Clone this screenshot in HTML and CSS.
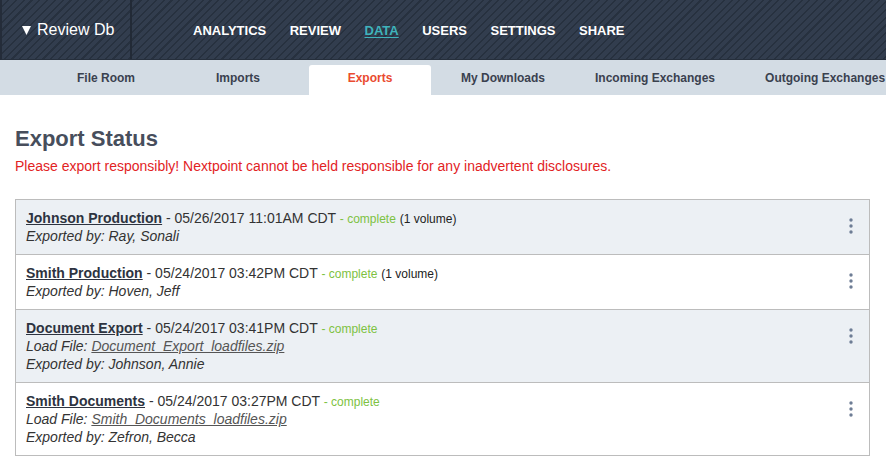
FILE: index.html
```html
<!DOCTYPE html>
<html>
<head>
<meta charset="utf-8">
<link rel="stylesheet" href="styles.css">
</head>
<body>
<header class="topbar">
  <div class="brand">
    <svg class="caret" width="9" height="9" viewBox="0 0 9 9"><polygon points="0,0 9,0 4.5,9" fill="#fff"/></svg>
    <span>Review Db</span>
  </div>
  <nav class="mainnav">
    <a class="navitem">ANALYTICS</a>
    <a class="navitem">REVIEW</a>
    <a class="navitem active">DATA</a>
    <a class="navitem">USERS</a>
    <a class="navitem">SETTINGS</a>
    <a class="navitem">SHARE</a>
  </nav>
</header>
<div class="tabbar">
  <a class="tab">File Room</a>
  <a class="tab">Imports</a>
  <a class="tab current">Exports</a>
  <a class="tab">My Downloads</a>
  <a class="tab">Incoming Exchanges</a>
  <a class="tab">Outgoing Exchanges</a>
</div>
<main class="content">
  <h1 class="title">Export Status</h1>
  <p class="warning">Please export responsibly! Nextpoint cannot be held responsible for any inadvertent disclosures.</p>
  <ul class="exports">
    <li class="row odd">
      <div class="info">
        <div class="line"><a class="name">Johnson Production</a> - 05/26/2017 11:01AM CDT <span class="status">- complete</span> <span class="vol">(1 volume)</span></div>
        <div class="line meta">Exported by: Ray, Sonali</div>
      </div>
      <svg class="kebab" width="4" height="16" viewBox="0 0 4 16"><circle cx="2" cy="2" r="1.7"/><circle cx="2" cy="8" r="1.7"/><circle cx="2" cy="14" r="1.7"/></svg>
    </li>
    <li class="row">
      <div class="info">
        <div class="line"><a class="name">Smith Production</a> - 05/24/2017 03:42PM CDT <span class="status">- complete</span> <span class="vol">(1 volume)</span></div>
        <div class="line meta">Exported by: Hoven, Jeff</div>
      </div>
      <svg class="kebab" width="4" height="16" viewBox="0 0 4 16"><circle cx="2" cy="2" r="1.7"/><circle cx="2" cy="8" r="1.7"/><circle cx="2" cy="14" r="1.7"/></svg>
    </li>
    <li class="row odd">
      <div class="info">
        <div class="line"><a class="name">Document Export</a> - 05/24/2017 03:41PM CDT <span class="status">- complete</span></div>
        <div class="line meta">Load File: <a class="file">Document_Export_loadfiles.zip</a></div>
        <div class="line meta">Exported by: Johnson, Annie</div>
      </div>
      <svg class="kebab" width="4" height="16" viewBox="0 0 4 16"><circle cx="2" cy="2" r="1.7"/><circle cx="2" cy="8" r="1.7"/><circle cx="2" cy="14" r="1.7"/></svg>
    </li>
    <li class="row">
      <div class="info">
        <div class="line"><a class="name">Smith Documents</a> - 05/24/2017 03:27PM CDT <span class="status">- complete</span></div>
        <div class="line meta">Load File: <a class="file">Smith_Documents_loadfiles.zip</a></div>
        <div class="line meta">Exported by: Zefron, Becca</div>
      </div>
      <svg class="kebab" width="4" height="16" viewBox="0 0 4 16"><circle cx="2" cy="2" r="1.7"/><circle cx="2" cy="8" r="1.7"/><circle cx="2" cy="14" r="1.7"/></svg>
    </li>
  </ul>
</main>
</body>
</html>
```
FILE: styles.css
```css
* { box-sizing: border-box; }
html, body {
  margin: 0;
  padding: 0;
  background: #fff;
  font-family: "Liberation Sans", Arial, sans-serif;
}
.topbar {
  height: 60px;
  display: flex;
  align-items: stretch;
  background-color: #323d4e;
  background-image: repeating-linear-gradient(135deg, #323d4e 0px, #323d4e 4px, #27313f 4px, #27313f 5.5px);
  border-left: 2px solid #242c39;
  border-bottom: 1px solid #262f3c;
}
.brand {
  width: 130px;
  border-right: 2px solid #222a36;
  display: flex;
  align-items: center;
  padding-left: 20px;
  color: #fff;
  font-size: 16px;
  gap: 6px;
}
.caret { display: block; margin-top: 1px; }
.mainnav {
  display: flex;
  align-items: center;
  padding-left: 61px;
  gap: 23.5px;
  padding-top: 1px;
}
.navitem {
  color: #fff;
  font-size: 13px;
  font-weight: bold;
  text-decoration: none;
}
.navitem.active {
  color: #3fb3bb;
  text-decoration: underline;
  text-underline-offset: 2px;
}
.tabbar {
  height: 35px;
  background: #d3dce4;
  display: flex;
  gap: 10px;
  padding: 5px 0 0 45px;
  overflow: hidden;
}
.tab {
  min-width: 122px;
  height: 30px;
  padding: 0 20px;
  line-height: 26px;
  text-align: center;
  font-size: 12px;
  font-weight: bold;
  color: #3a414f;
  white-space: nowrap;
  flex-shrink: 0;
  border-radius: 3px 3px 0 0;
}
.tab.current {
  background: #fff;
  color: #ea4b30;
}
.content {
  padding: 0 16px 0 15px;
}
.title {
  margin: 31px 0 0 0;
  font-size: 22px;
  line-height: 26px;
  font-weight: bold;
  color: #474e5c;
}
.warning {
  margin: 5px 0 0 0;
  font-size: 14px;
  line-height: 18px;
  color: #e2231f;
}
.exports {
  list-style: none;
  margin: 24px 0 0 0;
  padding: 0;
  border: 1px solid #bcbcbc;
}
.row {
  display: flex;
  justify-content: space-between;
  align-items: flex-start;
  padding: 9px 10px 9px 10px;
  border-top: 1px solid #bcbcbc;
  background: #fff;
}
.row:first-child { border-top: none; }
.row.odd { background: #ecf0f4; }
.line {
  font-size: 14px;
  line-height: 18px;
  height: 18px;
  color: #333;
  white-space: nowrap;
}
.name {
  font-weight: bold;
  color: #2d3340;
  text-decoration: underline;
}
.status {
  color: #7dc242;
  font-size: 12px;
  line-height: 12px;
}
.vol {
  font-size: 12px;
  line-height: 12px;
  color: #222;
}
.meta {
  font-style: italic;
  color: #333;
}
.file {
  color: #555;
  text-decoration: underline;
}
.kebab {
  display: block;
  margin-top: 9px;
  margin-right: 6px;
  fill: #6e7d95;
}
```
